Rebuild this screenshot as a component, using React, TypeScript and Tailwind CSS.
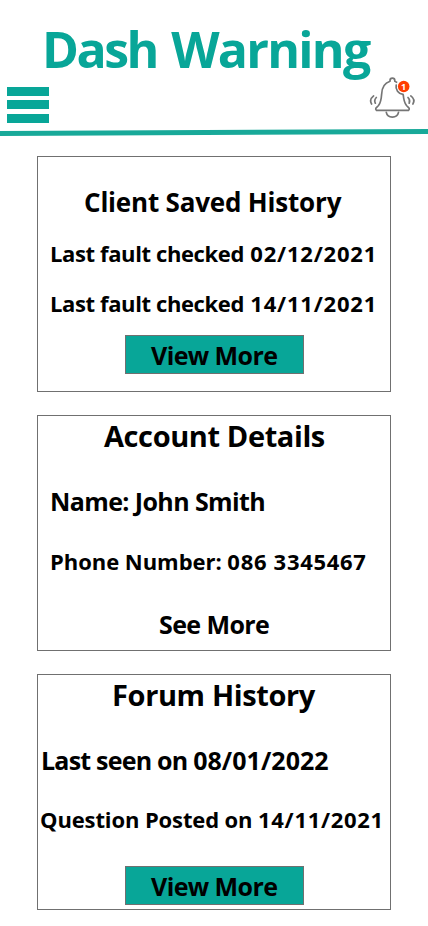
import type { ReactNode } from "react";

function Line({ className, children }: { className: string; children: ReactNode }) {
  return <p className={`whitespace-nowrap ${className}`}>{children}</p>;
}

function Card({ className, children }: { className: string; children: ReactNode }) {
  return (
    <section className={`mx-auto flex h-[236px] w-[354px] flex-col border border-[#707070] ${className}`}>
      {children}
    </section>
  );
}

function ViewMore() {
  return (
    <button className="ml-[87px] flex h-[39px] w-[179px] shrink-0 border border-[#707070] bg-[#08a698] pl-[25px] text-[25px] leading-[39px] font-bold tracking-[-0.6px] whitespace-nowrap">
      View More
    </button>
  );
}

function Bell() {
  return (
    <svg className="h-[46px] w-[50px]" viewBox="368 75 50 46" fill="none" stroke="#757575" strokeWidth="1.7" strokeLinecap="round" strokeLinejoin="round">
      <path d="M376.5 110.3 C374.5 108.5 376.5 107.5 378.5 105.5 C381 102.5 381.3 99 381.6 94.5 C381.8 86.5 384.5 83 390 81.3 V80.5 A2.3 2.3 0 0 1 394.8 80.5 V81.3 C400 83 402.8 86.5 403.2 94.5 C403.6 99 404 102.5 406.5 105.5 C408.5 107.5 410.5 108.5 408.5 110.3 Z" />
      <path d="M386.3 112.3 C387.5 118.6 397.2 118.6 398.5 112.3" />
      <path d="M376.3 97.5 Q373.8 100 375.3 103.2 M373.6 95.9 Q368.9 99.5 371.6 104" />
      <path d="M408 97.5 Q410.5 100 409.2 103.2 M410.8 95.9 Q415.6 99.5 412.9 104" />
      <circle cx="403.7" cy="86.5" r="7.7" fill="#fff" stroke="none" />
      <path d="M396.2 85 A7.8 7.8 0 0 0 403 94.4" />
      <circle cx="403.7" cy="86.5" r="5.8" fill="#ff3d00" stroke="none" />
      <text x="403.5" y="89.7" fill="#fff" stroke="none" fontSize="9" fontWeight="700" textAnchor="middle">1</text>
    </svg>
  );
}

export default function App() {
  return (
    <main className="flex h-[926px] w-[428px] flex-col overflow-hidden bg-white font-['Open_Sans',sans-serif] font-bold text-black">
      <header className="flex h-[137px] shrink-0 flex-col">
        <h1 className="h-[75px] pt-[19px] pl-[42px] text-[50px] leading-[60px] tracking-[-1.75px] whitespace-nowrap text-[#08a698]">
          <span className="mr-[3px] tracking-[-2.5px]">Dash</span> Warning
        </h1>
        <div className="flex h-[53px] shrink-0 justify-between pr-[10px] pl-[7px]">
          <button aria-label="Menu" className="flex w-[42px] flex-col pt-3">
            <span className="h-[9px] w-full bg-[#08a698]" />
            <span className="mt-1 h-[9px] w-full bg-[#08a698]" />
            <span className="mt-[5px] h-[9px] w-full bg-[#08a698]" />
          </button>
          <Bell />
        </div>
        <svg className="h-[9px] w-full shrink-0" viewBox="0 128 428 9">
          <path d="M0 131 L428 129 V134 L0 136 Z" fill="#18a999" />
        </svg>
      </header>
      <Card className="mt-[19px]">
        <Line className="mt-[25px] ml-[46px] text-[26px] leading-[40px] tracking-[-0.19px]">Client Saved History</Line>
        <Line className="mt-[15px] ml-[12px] text-[22px] leading-[32px] tracking-[-0.38px]">
          Last fault checked <span className="ml-px tracking-[0.8px]">02/12/2021</span>
        </Line>
        <Line className="mt-[18px] mb-[16px] ml-[12px] text-[22px] leading-[32px] tracking-[-0.38px]">
          Last fault checked <span className="ml-px tracking-[0.8px]">14/11/2021</span>
        </Line>
        <ViewMore />
      </Card>
      <Card className="mt-[23px]">
        <Line className="ml-[66px] text-[29px] leading-[40px] tracking-[-0.4px]">Account Details</Line>
        <Line className="mt-[25px] ml-[12px] text-[25px] leading-[40px] tracking-[-0.6px]">Name: John Smith</Line>
        <Line className="mt-[24px] ml-[12px] text-[22px] leading-[32px] tracking-[-0.04px]">
          Phone Number: <span className="tracking-[0.7px]">086 3345467</span>
        </Line>
        <Line className="mt-[27px] ml-[121px] text-[25px] leading-[40px] tracking-[-0.6px]">See More</Line>
      </Card>
      <Card className="mt-[23px]">
        <Line className="ml-[74px] text-[29px] leading-[40px] tracking-[-0.37px]">Forum History</Line>
        <Line className="mt-[25px] ml-[3px] text-[25px] leading-[40px] tracking-[-0.78px]">
          Last seen on <span className="tracking-[0.05px]">08/01/2022</span>
        </Line>
        <Line className="mt-[23px] mb-[31px] ml-[2px] text-[22px] leading-[32px] tracking-[-0.12px]">
          Question Posted on <span className="tracking-[0.7px]">14/11/2021</span>
        </Line>
        <ViewMore />
      </Card>
    </main>
  );
}
